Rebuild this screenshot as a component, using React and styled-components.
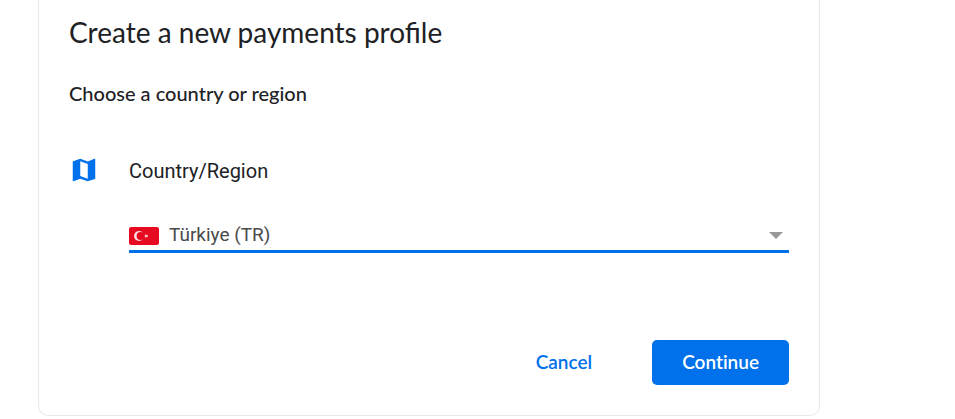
import React from "react";
import styled, { createGlobalStyle } from "styled-components";

const GlobalStyle = createGlobalStyle`
  * { box-sizing: border-box; }
  body {
    margin: 0;
    background: #ffffff;
    color: #202124;
    font-family: Roboto, sans-serif;
  }
`;

const displayFont = `"Google Sans", "Product Sans", Lato, sans-serif`;

const Card = styled.form`
  margin: 0 135px 0 38px;
  padding: 12px 30px 30px;
  border: 1px solid #e8eaed;
  border-top: 0;
  border-radius: 0 0 10px 10px;
`;

const Title = styled.h1`
  margin: 0;
  font-family: ${displayFont};
  font-size: 28px;
  line-height: 40px;
  font-weight: 400;
`;

const Subtitle = styled.h2`
  margin: 27px 0 0;
  font-family: ${displayFont};
  font-size: 20px;
  line-height: 28px;
  font-weight: 500;
`;

const Field = styled.div`
  display: grid;
  grid-template-columns: 30px 1fr;
  column-gap: 30px;
  margin-top: 48px;
`;

const IconCell = styled.div`
  display: flex;
  align-items: flex-start;
  justify-content: center;
`;

const Label = styled.label`
  font-size: 20px;
  line-height: 32px;
`;

const SelectRow = styled.div`
  grid-column: 2;
  display: flex;
  align-items: center;
  gap: 10px;
  height: 38px;
  margin-top: 28px;
  padding: 6px 6px 0 0;
  border-bottom: 3px solid #0071eb;
`;

const Select = styled.select`
  flex: 1;
  min-width: 0;
  padding: 0 0 2px;
  border: 0;
  outline: 0;
  appearance: none;
  background: transparent;
  color: #4a4a4a;
  font-family: Roboto, sans-serif;
  font-size: 19px;
  line-height: 28px;
`;

const Actions = styled.div`
  display: flex;
  justify-content: flex-end;
  gap: 30px;
  margin-top: 87px;
`;

const Button = styled.button`
  height: 45px;
  padding: 0 30px 2px;
  border: 0;
  border-radius: 5px;
  background: ${({ $primary }) => ($primary ? "#0071eb" : "transparent")};
  color: ${({ $primary }) => ($primary ? "#ffffff" : "#0071eb")};
  font-family: ${displayFont};
  font-size: 19px;
  font-weight: 600;
  font-variant-ligatures: none;
  cursor: pointer;
`;

const MapIcon = () => (
  <svg width="30" height="30" viewBox="0 0 24 24" fill="#0071eb" aria-hidden="true">
    <path d="M20.5 3l-.16.03L15 5.1 9 3 3.36 4.9c-.21.07-.36.25-.36.48V20.5c0 .28.22.5.5.5l.16-.03L9 18.9l6 2.1 5.64-1.9c.21-.07.36-.25.36-.48V3.5c0-.28-.22-.5-.5-.5zM15 19l-6-2.11V5l6 2.11V19z" />
  </svg>
);

const Flag = () => (
  <svg width="30" height="18" viewBox="0 0 30 18" aria-hidden="true">
    <rect width="30" height="18" rx="2" fill="#e60a20" />
    <circle cx="10" cy="9" r="5" fill="#ffdfe3" />
    <circle cx="11.6" cy="9" r="4" fill="#e60a20" />
    <path
      d="M14.8 9l1.7-.6V6.8l1.1 1.4 1.7-.5L18.300 9l1 1.3-1.700-.5-1.100 1.400V9.600z"
      fill="#ffdfe3"
    />
  </svg>
);

const Caret = () => (
  <svg width="14" height="7" viewBox="0 0 14 7" aria-hidden="true">
    <path d="M0 0h14L7 7z" fill="#999999" />
  </svg>
);

export default function App() {
  return (
    <>
      <GlobalStyle />
      <Card onSubmit={(event) => event.preventDefault()}>
        <Title>Create a new payments profile</Title>
        <Subtitle>Choose a country or region</Subtitle>
        <Field>
          <IconCell>
            <MapIcon />
          </IconCell>
          <Label htmlFor="country">Country/Region</Label>
          <SelectRow>
            <Flag />
            <Select id="country" defaultValue="TR">
              <option value="TR">Türkiye (TR)</option>
            </Select>
            <Caret />
          </SelectRow>
        </Field>
        <Actions>
          <Button type="button">Cancel</Button>
          <Button type="submit" $primary>
            Continue
          </Button>
        </Actions>
      </Card>
    </>
  );
}
